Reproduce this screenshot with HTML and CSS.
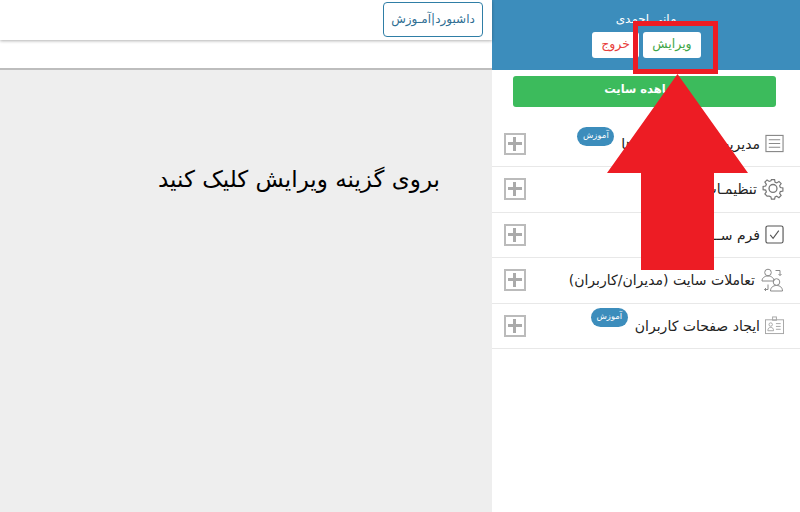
FILE: index.html
```html
<!DOCTYPE html>
<html lang="fa">
<head>
    <meta charset="UTF-8">
    <meta name="viewport" content="width=device-width, initial-scale=1.0">
    <title>ویرایش پروفایل</title>
    <link rel="stylesheet" href="styles.css">
</head>
<body>
    <div class="page">
        <main class="main">
            <div class="topbar">
                <a class="topbar-btn" href="#">داشبورد|آمـوزش</a>
            </div>
            <div class="subbar"></div>
            <div class="content">
                <p class="hint">بروی گزینه ویرایش کلیک کنید</p>
            </div>
        </main>

        <aside class="sidebar">
            <div class="profile">
                <div class="profile-name">مانی احمدی</div>
                <div class="profile-actions">
                    <a class="btn btn-edit" href="#">ویرایش</a>
                    <a class="btn btn-exit" href="#">خروج</a>
                </div>
            </div>
            <div class="view-wrap">
                <a class="view-site" href="#">مشاهده سایت</a>
            </div>
            <ul class="menu">
                <li class="menu-row">
                    <svg class="menu-icon" viewBox="0 0 20 20"><rect x="1" y="1.500" width="18" height="17" /><path d="M4 6h12M4 10h12M4 14h12" /></svg>
                    <span class="menu-label">مدیریت منوی صفحـه ها</span>
                    <span class="badge">آموزش</span>
                    <span class="plus"></span>
                </li>
                <li class="menu-row">
                    <svg class="menu-icon gear" viewBox="0 0 20 20"><path d="M8.400 1h3.200l.5 2.600 1.700.7 2.200-1.500 2.200 2.200-1.500 2.200.7 1.700 2.600.5v3.200l-2.600.5-.7 1.700 1.500 2.200-2.200 2.200-2.200-1.500-1.700.7-.5 2.300H8.400l-.5-2.300-1.700-.7L4 17.700l-2.200-2.200 1.500-2.200-.7-1.700L0 11.100V7.900l2.600-.5.7-1.700-1.500-2.200L4 1.300l2.200 1.500 1.700-.7z" transform="translate(1 .6) scale(.9)" /><circle cx="10" cy="9.500" r="3.600" /></svg>
                    <span class="menu-label">تنظیمـات</span>
                    <span class="plus"></span>
                </li>
                <li class="menu-row">
                    <svg class="menu-icon dark" viewBox="0 0 20 20"><rect x="1" y="1" width="18" height="18" rx="2" /><path d="M5.500 10.500l3 3.500 6-8" /></svg>
                    <span class="menu-label">فرم ســاز</span>
                    <span class="plus"></span>
                </li>
                <li class="menu-row">
                    <svg class="menu-icon wide" viewBox="0 0 24 24"><circle cx="8" cy="4.500" r="3.300" /><path d="M2 13c0-3 2.500-5 6-5s6 2 6 5z" /><circle cx="16.500" cy="14" r="3.300" /><path d="M10.500 23c0-3.500 2.500-5.500 6-5.500s6 2 6 5.500z" /><path d="M15.500 2.500h4.500v5M18.500 6l1.500 1.500L21.500 6M8 16.500v5h-3.500M6 20l-1.500 1.500L6 23" /></svg>
                    <span class="menu-label">تعاملات سایت (مدیران/کاربران)</span>
                    <span class="plus"></span>
                </li>
                <li class="menu-row">
                    <svg class="menu-icon card" viewBox="0 0 20 20"><rect x=".5" y="4" width="19" height="14.500" /><rect x="8" y="1" width="4" height="3.500" /><circle cx="6" cy="9" r="1.800" /><path d="M3 15.500c0-2.500 1.200-3.500 3-3.500s3 1 3 3.500zM11.500 8h5M11.500 11h5M11.500 14h5" /></svg>
                    <span class="menu-label">ایجاد صفحات کاربران</span>
                    <span class="badge">آموزش</span>
                    <span class="plus"></span>
                </li>
            </ul>
        </aside>

        <div class="callout-box"></div>
        <svg class="callout-arrow" viewBox="0 0 141 196"><polygon points="70.500,0 141,99 107,99 107,196 34,196 34,99 0,99" /></svg>
    </div>
</body>
</html>
```

FILE: styles.css
```css
* {
    box-sizing: border-box;
}
html, body {
    margin: 0;
    height: 100%;
}
body {
    font-family: "DejaVu Sans", "Noto Sans", sans-serif;
    color: #222;
    background-color: #fff;
    overflow: hidden;
}
a {
    text-decoration: none;
}
.page {
    position: relative;
    display: flex;
    height: 512px;
}

/* left side */
.main {
    flex: 1;
    display: flex;
    flex-direction: column;
}
.topbar {
    position: relative;
    z-index: 1;
    height: 40px;
    padding: 2px 9px 0 0;
    display: flex;
    justify-content: flex-end;
    align-items: flex-start;
    background-color: #fff;
    box-shadow: 0 1px 3px rgba(0, 0, 0, 0.3);
}
.topbar-btn {
    width: 100px;
    height: 35px;
    line-height: 32px;
    text-align: center;
    font-size: 12px;
    color: #2f6f93;
    border: 1px solid #2f7ea6;
    border-radius: 4px;
    direction: rtl;
}
.subbar {
    height: 30px;
    background-color: #fff;
    border-bottom: 2px solid #bdbdbd;
}
.content {
    flex: 1;
    padding: 92px 52px 0 0;
    background-color: #eee;
}
.hint {
    margin: 0;
    direction: rtl;
    text-align: right;
    font-size: 23px;
    line-height: 34px;
    color: #000;
}

/* sidebar */
.sidebar {
    width: 308px;
    background-color: #fff;
    direction: rtl;
}
.profile {
    height: 70px;
    padding-top: 11px;
    background-color: #3c8dbc;
}
.profile-name {
    height: 21px;
    line-height: 16px;
    text-align: center;
    font-size: 12px;
    color: #fff;
}
.profile-actions {
    display: flex;
    justify-content: flex-start;
    gap: 4px;
    padding-right: 99px;
}
.btn {
    height: 26px;
    line-height: 23px;
    text-align: center;
    font-size: 12.500px;
    background-color: #fff;
    border-radius: 3px;
}
.btn-edit {
    width: 58px;
    color: #3fa648;
}
.btn-exit {
    width: 47px;
    color: #e8403c;
}
.view-wrap {
    padding: 6px 24px 0 21px;
}
.view-site {
    display: block;
    height: 31px;
    line-height: 27px;
    text-align: center;
    font-size: 11.500px;
    font-weight: bold;
    color: #fff;
    background-color: #3cbb5c;
    border-radius: 3px;
}
.menu {
    list-style: none;
    margin: 14px 0 0;
    padding: 0;
}
.menu-row {
    display: flex;
    align-items: center;
    gap: 5px;
    height: 45.500px;
    padding: 0 16px 0 12px;
    border-bottom: 1px solid #e8e8e8;
}
.menu-row:first-child {
    height: 46px;
}
.menu-icon {
    flex: none;
    width: 19px;
    height: 19px;
    fill: none;
    stroke: #8a8a8a;
    stroke-width: 1.200;
}
.menu-icon.dark {
    stroke: #555;
}
.menu-icon.gear {
    width: 22px;
    height: 22px;
    stroke: #777;
}
.menu-icon.wide {
    width: 24px;
    height: 24px;
    stroke-width: 1;
}
.menu-icon.card {
    stroke: #a5a5a5;
    stroke-width: 1;
}
.menu-label {
    font-size: 14px;
    white-space: nowrap;
}
.badge {
    align-self: flex-start;
    margin: 6px 2px 0 0;
    width: 37px;
    height: 19px;
    line-height: 16px;
    text-align: center;
    font-size: 8.500px;
    color: #fff;
    background-color: #3c8dbc;
    border-radius: 10px;
}
.menu-row:last-child .badge {
    margin-top: 4px;
}
.plus {
    position: relative;
    flex: none;
    width: 22px;
    height: 22px;
    margin-right: auto;
    border: 2px solid #bbb;
}
.plus::before, .plus::after {
    content: "";
    position: absolute;
    background-color: #aaa;
}
.plus::before {
    left: 2px;
    right: 2px;
    top: 7px;
    height: 3px;
}
.plus::after {
    top: 2px;
    bottom: 2px;
    left: 7px;
    width: 3px;
}

/* red annotation drawn on top of the screenshot */
.callout-box {
    position: absolute;
    left: 633px;
    top: 21px;
    width: 85px;
    height: 53px;
    border: 5px solid #ed1c24;
}
.callout-arrow {
    position: absolute;
    left: 607px;
    top: 74px;
    width: 141px;
    height: 196px;
    fill: #ed1c24;
}
```
